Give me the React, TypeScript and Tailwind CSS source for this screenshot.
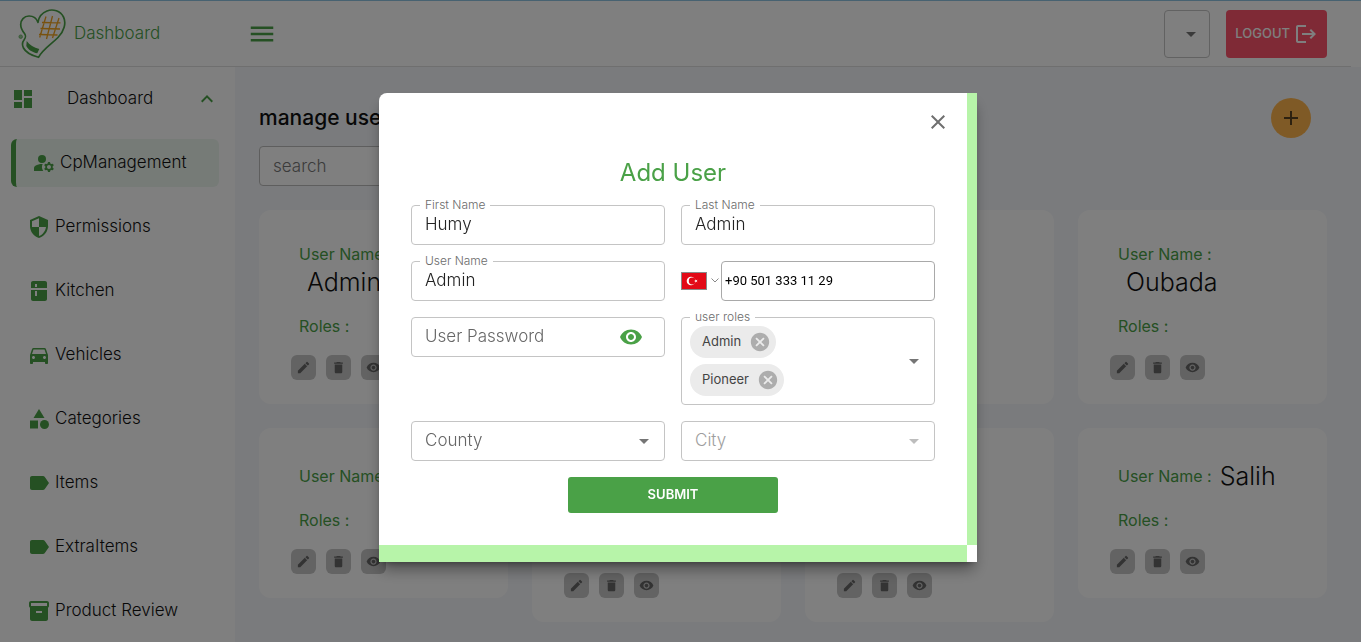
import { useState, type ReactNode } from "react";
import type { IconType } from "react-icons";
import {
  MdAdd,
  MdArrowDropDown,
  MdCancel,
  MdCategory,
  MdClose,
  MdDashboard,
  MdDelete,
  MdDirectionsCar,
  MdEdit,
  MdExpandLess,
  MdInventory2,
  MdKitchen,
  MdLabel,
  MdLogout,
  MdManageAccounts,
  MdMenu,
  MdSecurity,
  MdVisibility,
} from "react-icons/md";

const navItems: { label: string; icon: IconType }[] = [
  { label: "CpManagement", icon: MdManageAccounts },
  { label: "Permissions", icon: MdSecurity },
  { label: "Kitchen", icon: MdKitchen },
  { label: "Vehicles", icon: MdDirectionsCar },
  { label: "Categories", icon: MdCategory },
  { label: "Items", icon: MdLabel },
  { label: "ExtraItems", icon: MdLabel },
  { label: "Product Review", icon: MdInventory2 },
];

const users = ["Admin", "Mohammad", "Humy", "Oubada", "Omar", "Abdullah", "Mustafa", "Salih"];

function Logo() {
  return (
    <svg viewBox="0 0 48 50" className="h-[50px] w-12" fill="none" aria-hidden="true">
      <path
        d="M20 13.500C18.500 9 14.500 7 11 7C6 7 2.700 11 2.700 15.500C2.700 19.500 4.500 22 6.500 24.500C8.500 27.500 7.500 29 6 31C4 33.500 4 36 5.500 39C8 44 14 46.500 20.500 48.300C25 40 33 35.500 40 28.500C46 22.500 48.500 14 45.500 8C42.500 2 35 -.500 29 2C24 4 20.500 8.500 20 13.500Z"
        stroke="#4aa147"
        strokeWidth="1.700"
        strokeLinejoin="round"
      />
      <path d="M8.700 32C11.500 36 16 38.500 21.300 40L19.300 44.300C14.500 43.500 10 40.500 8.300 37Z" fill="#4aa147" />
      <circle cx="2.700" cy="27.700" r="1.800" fill="#9acb98" stroke="#4aa147" strokeWidth=".6" />
      <path
        d="M28 7.500L21.700 28.500M34.500 7L28.500 30M41 9L34.500 29M24 13.500L42.500 13.800M22.500 19.500L42 20M21 25.500L39.500 26"
        stroke="#f0a21c"
        strokeWidth="1.300"
      />
    </svg>
  );
}

function UserCard({ name }: { name: string }) {
  const actions = [
    { label: "Edit", Icon: MdEdit },
    { label: "Delete", Icon: MdDelete },
    { label: "View", Icon: MdVisibility },
  ];
  return (
    <article className="flex flex-col gap-4 rounded-xl bg-white px-8 pt-8 pb-6">
      <p className="flex flex-wrap items-center px-2">
        <span className="text-[16px] leading-6 text-[#4aa147]">User Name :</span>
        <span className="ml-2 text-[25px] leading-8 font-light">{name}</span>
      </p>
      <p className="px-2 text-[16px] leading-6 text-[#4aa147]">Roles :</p>
      <div className="flex gap-[10px] pt-px">
        {actions.map(({ label, Icon }) => (
          <button
            key={label}
            type="button"
            aria-label={`${label} ${name}`}
            className="flex size-[25px] items-center justify-center rounded-md bg-[#c6c6c6] text-[#666]"
          >
            <Icon size={15} />
          </button>
        ))}
      </div>
    </article>
  );
}

function Outlined({ id, label, children }: { id: string; label: string; children: ReactNode }) {
  return (
    <div className="relative rounded border border-[#c4c4c4]">
      <label htmlFor={id} className="absolute -top-[9px] left-2 bg-white px-[5px] text-[12px] leading-4 font-light text-[#6b6b6b]">
        {label}
      </label>
      {children}
    </div>
  );
}

function TextField({ id, label, value }: { id: string; label: string; value: string }) {
  return (
    <Outlined id={id} label={label}>
      <input
        id={id}
        defaultValue={value}
        className="block h-[38px] w-full bg-transparent px-[13px] pb-[2px] text-[17px] font-light text-[#222] outline-none"
      />
    </Outlined>
  );
}

function SelectField({ id, label, disabled }: { id: string; label: string; disabled?: boolean }) {
  return (
    <div className="relative">
      <select
        id={id}
        aria-label={label}
        disabled={disabled}
        className="block h-10 w-full appearance-none rounded border border-[#c4c4c4] bg-white px-[13px] text-[17px] font-light text-[#666] opacity-100 disabled:text-[#9e9e9e]"
      >
        <option>{label}</option>
      </select>
      <MdArrowDropDown
        size={24}
        className={`pointer-events-none absolute top-2 right-[9px] ${disabled ? "text-[#bdbdbd]" : "text-[#757575]"}`}
      />
    </div>
  );
}

function Flag() {
  return (
    <svg viewBox="0 0 26 18" className="h-[18px] w-[26px]" role="img" aria-label="Turkey">
      <rect x=".5" y=".5" width="25" height="17" fill="#e30a17" stroke="#8a8a8a" />
      <circle cx="10" cy="9" r="4.300" fill="#fff" />
      <circle cx="11.200" cy="9" r="3.400" fill="#e30a17" />
      <path d="M13 9l3.500-1.200-2.100 3V7.200l2.100 3z" fill="#fff" />
    </svg>
  );
}

function AddUserDialog() {
  const [roles, setRoles] = useState(["Admin", "Pioneer"]);
  return (
    <div className="fixed inset-0 flex items-center justify-center bg-black/50 pt-3 pr-[5px]">
      <div
        role="dialog"
        aria-modal="true"
        aria-labelledby="dialog-title"
        className="grid w-full max-w-[598px] grid-cols-[1fr_10px] overflow-hidden rounded-tl-lg bg-white shadow-lg shadow-black/40"
      >
        <div>
          <div className="flex justify-end pt-[17px] pr-[17px]">
            <button type="button" aria-label="Close" className="block text-[#6f6f6f]">
              <MdClose size={24} />
            </button>
          </div>
          <form className="px-8 pt-[19px] pb-8" onSubmit={(e) => e.preventDefault()}>
            <h2 id="dialog-title" className="pb-3 text-center text-[24px] leading-10 font-normal text-[#4aa147]">
              Add User
            </h2>
            <div className="grid grid-cols-2 items-start gap-4">
              <TextField id="first" label="First Name" value="Humy" />
              <TextField id="last" label="Last Name" value="Admin" />
              <TextField id="user" label="User Name" value="Admin" />
              <div className="flex items-center">
                <button type="button" aria-label="Country code" className="flex w-10 items-center gap-1">
                  <Flag />
                  <svg viewBox="0 0 8 5" className="h-[5px] w-2" fill="none" stroke="#888" aria-hidden="true">
                    <path d="M.5 .5L4 4L7.500 .5" />
                  </svg>
                </button>
                <input
                  aria-label="Phone number"
                  type="tel"
                  defaultValue="+90 501 333 11 29"
                  className="h-10 min-w-0 flex-1 rounded border border-[#a9a9a9] px-[3px] font-[Roboto,sans-serif] text-[13px] text-black"
                />
              </div>
              <div className="flex h-10 items-center rounded border border-[#c4c4c4] pr-[21px] pl-[13px]">
                <input
                  aria-label="User Password"
                  type="password"
                  placeholder="User Password"
                  className="min-w-0 flex-1 bg-transparent text-[17px] font-light outline-none placeholder:text-[#666]"
                />
                <button type="button" aria-label="Show password" className="text-[#4aa147]">
                  <MdVisibility size={24} />
                </button>
              </div>
              <Outlined id="roles" label="user roles">
                <div className="flex min-h-[86px] items-center justify-between px-2">
                  <ul className="flex flex-col items-start gap-[6px]">
                    {roles.map((role) => (
                      <li
                        key={role}
                        className="flex h-8 items-center gap-2 rounded-full bg-[#ebebeb] pr-[5px] pl-3 text-[13px] text-[#444]"
                      >
                        {role}
                        <button
                          type="button"
                          aria-label={`Remove ${role}`}
                          onClick={() => setRoles(roles.filter((r) => r !== role))}
                          className="text-[#adadad]"
                        >
                          <MdCancel size={22} />
                        </button>
                      </li>
                    ))}
                  </ul>
                  <button id="roles" type="button" className="text-[#757575]">
                    <MdArrowDropDown size={24} />
                  </button>
                </div>
              </Outlined>
              <SelectField id="county" label="County" />
              <SelectField id="city" label="City" disabled />
            </div>
            <button
              type="submit"
              className="mx-auto mt-4 block h-9 w-[210px] rounded-[3px] bg-[#4aa147] text-[13px] font-semibold text-white"
            >
              SUBMIT
            </button>
          </form>
        </div>
        <div className="bg-[#b7f4a9]" />
        <div className="h-[17px] bg-[#b7f4a9]" />
      </div>
    </div>
  );
}

export default function App() {
  return (
    <div className="flex h-screen flex-col overflow-hidden bg-[#f5f7fa] font-[Inter,sans-serif] text-[#111]">
      <header className="border-t border-[#8fc4e3] bg-white">
        <div className="mr-[10px] flex h-[66px] items-center border-b border-[#dedede] pr-6 pl-[18px]">
          <a href="#home" className="flex w-[229px] items-center gap-2">
            <Logo />
            <span className="text-[17px] font-light text-[#4aa147]">Dashboard</span>
          </a>
          <button type="button" aria-label="Toggle menu" className="text-[#4aa147]">
            <MdMenu size={30} />
          </button>
          <div className="relative mr-4 ml-auto">
            <select
              aria-label="Language"
              className="block h-12 w-[46px] appearance-none rounded border border-[#c4c4c4] bg-white"
            />
            <MdArrowDropDown size={24} className="pointer-events-none absolute top-3 right-[7px] text-[#757575]" />
          </div>
          <button
            type="button"
            className="flex h-12 items-center gap-1 rounded bg-[#fe546c] px-[9px] text-[13px] font-medium text-white"
          >
            LOGOUT
            <MdLogout size={24} />
          </button>
        </div>
      </header>
      <div className="flex min-h-0 flex-1">
        <nav className="w-[235px] shrink-0 bg-white pt-2 pr-4 pl-[11px] text-[17px] font-light">
          <button type="button" className="flex h-12 w-full items-center">
            <MdDashboard size={24} className="text-[#4aa147]" />
            <span className="ml-8">Dashboard</span>
            <MdExpandLess size={24} className="ml-auto text-[#4aa147]" />
          </button>
          <ul className="mt-4 flex flex-col gap-4">
            {navItems.map(({ label, icon: Icon }, i) => (
              <li key={label}>
                <a
                  href={`#${label}`}
                  className={`flex h-12 items-center gap-1 pl-4 ${i === 0 ? "rounded-md border-l-[5px] border-[#4aa147] bg-[#edf6ef]" : ""}`}
                >
                  <Icon size={24} className="text-[#4aa147]" />
                  {label}
                </a>
              </li>
            ))}
          </ul>
        </nav>
        <main className="flex-1 pt-[31px] pr-[34px] pl-6">
          <div className="flex h-10 items-center justify-between pr-4">
            <h1 className="text-[21px] font-medium">manage users</h1>
            <button
              type="button"
              aria-label="Add user"
              className="flex size-10 items-center justify-center rounded-full bg-[#ffb54d] text-[#5a4220]"
            >
              <MdAdd size={24} />
            </button>
          </div>
          <input
            aria-label="search"
            placeholder="search"
            className="mt-2 block h-10 w-[254px] rounded border border-[#bcbcbc] bg-white px-[13px] text-[17px] font-light placeholder:text-[#777]"
          />
          <div className="mt-6 grid grid-cols-4 items-start gap-6">
            {users.map((name) => (
              <UserCard key={name} name={name} />
            ))}
          </div>
        </main>
      </div>
      <AddUserDialog />
    </div>
  );
}
